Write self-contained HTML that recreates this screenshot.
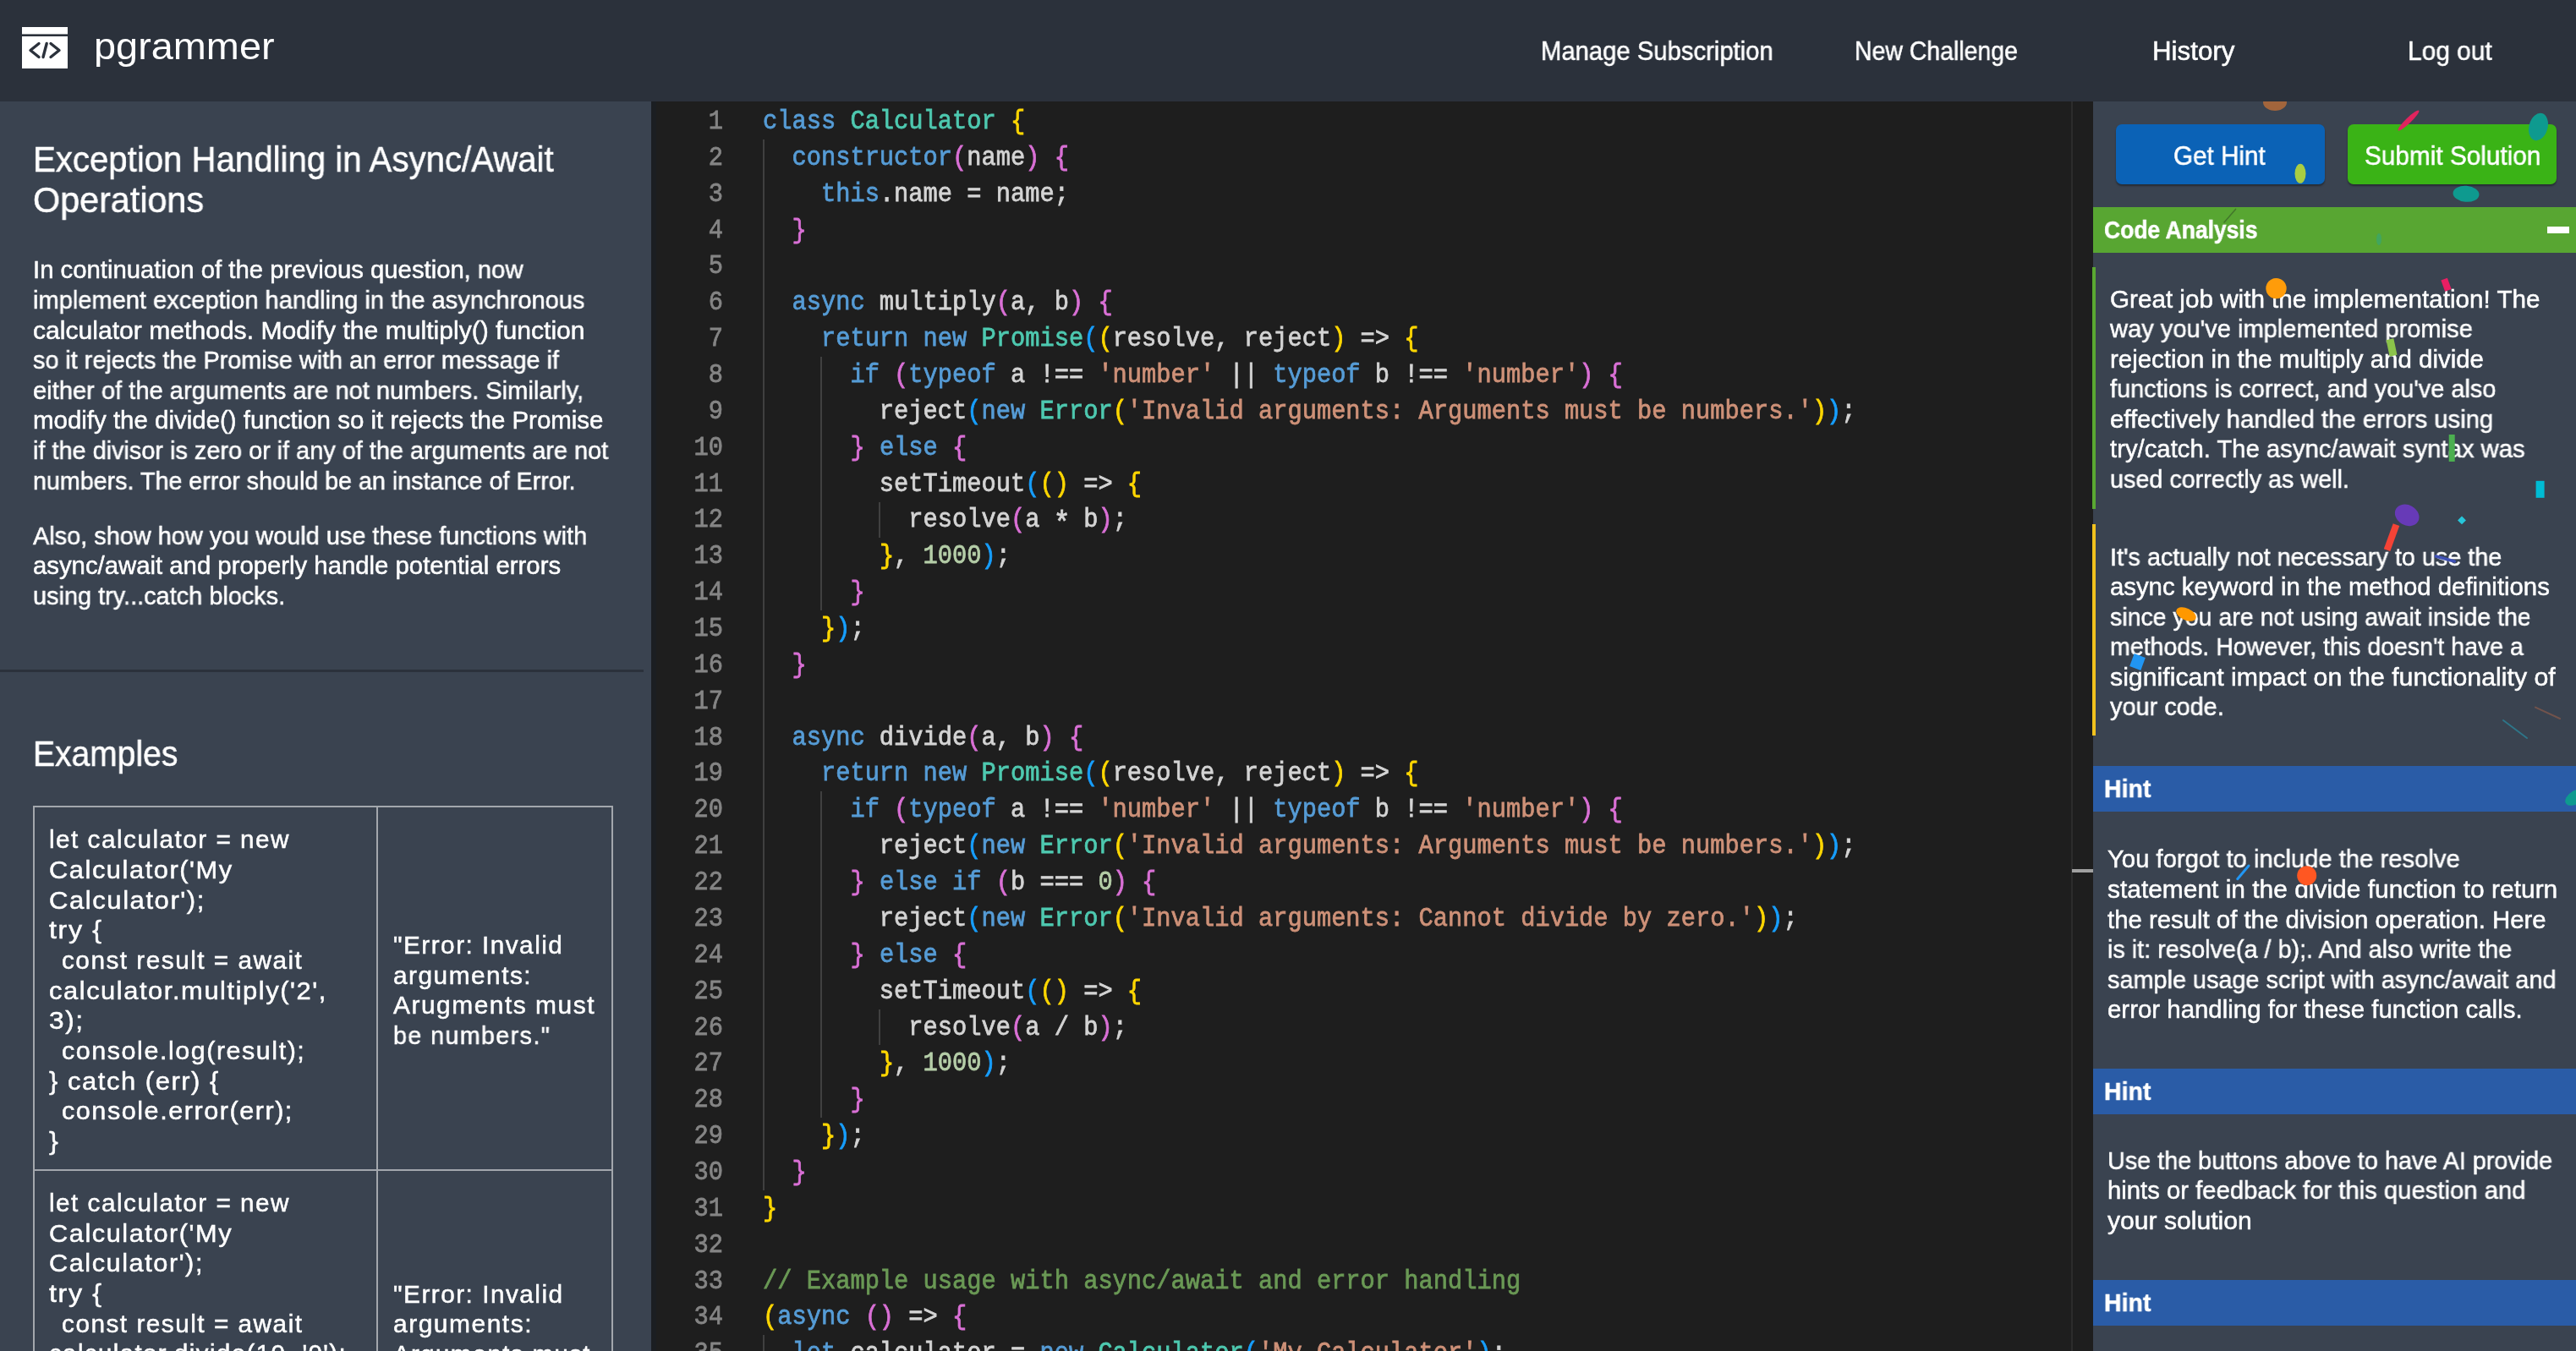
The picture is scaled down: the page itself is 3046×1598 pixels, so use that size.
<!DOCTYPE html><html><head><meta charset="utf-8"><style>
html,body{margin:0;padding:0;width:3046px;height:1598px;overflow:hidden;background:#3a4350}
.t{position:absolute;white-space:pre;font-family:"Liberation Sans", sans-serif;will-change:transform;-webkit-text-stroke:0.5px currentColor}
.m{position:absolute;white-space:pre;font-family:"Liberation Mono", monospace;font-size:28.72px;line-height:28.72px;color:#d4d4d4;will-change:transform;-webkit-text-stroke:0.7px currentColor}
.k{color:#569cd6}.y{color:#4ec9b0}.s{color:#ce9178}.n{color:#b5cea8}.c{color:#6a9955}.b1{color:#ffd700}.b2{color:#da70d6}.b3{color:#179fff}.ast{display:inline-block;transform:translateY(5px) scale(1.15)}
.ln{position:absolute;white-space:pre;font-family:"Liberation Mono", monospace;font-size:28.72px;line-height:28.72px;color:#858585;text-align:right;width:120px;will-change:transform;-webkit-text-stroke:0.7px currentColor}
</style></head><body>
<div style="position:absolute;left:0px;top:0px;width:3046px;height:120px;background:#2b313b;"></div>
<svg style="position:absolute;left:26px;top:32px" width="54" height="49" viewBox="0 0 54 49">
<rect x="0" y="0" width="54" height="8.4" fill="#fff"/>
<rect x="0" y="11" width="54" height="38" fill="#fff"/>
<path d="M20 19.5 L10 27.5 L20 35.5" fill="none" stroke="#2b313b" stroke-width="3.4" stroke-linecap="round" stroke-linejoin="round"/>
<path d="M34 19.5 L44 27.5 L34 35.5" fill="none" stroke="#2b313b" stroke-width="3.4" stroke-linecap="round" stroke-linejoin="round"/>
<path d="M29.2 19.5 L25 35.5" fill="none" stroke="#2b313b" stroke-width="3.4" stroke-linecap="round"/>
</svg>
<div class="t" id="t0" style="left:111.00px;top:31.97px;font-size:45px;line-height:45px;color:#fff;font-weight:400;letter-spacing:0.0px;transform:scale(1.0415,1.0);transform-origin:0 38.09px;-webkit-text-stroke:0;">pgrammer</div>
<div class="t" id="t1" style="left:1822.20px;top:44.68px;font-size:30.5px;line-height:30.5px;color:#fff;font-weight:400;letter-spacing:0.0px;transform:scale(0.9589,1.0);transform-origin:0 25.82px;">Manage Subscription</div>
<div class="t" id="t2" style="left:2193.00px;top:44.68px;font-size:30.5px;line-height:30.5px;color:#fff;font-weight:400;letter-spacing:0.0px;transform:scale(0.932,1.0);transform-origin:0 25.82px;">New Challenge</div>
<div class="t" id="t3" style="left:2544.60px;top:44.68px;font-size:30.5px;line-height:30.5px;color:#fff;font-weight:400;letter-spacing:0.0px;transform:scale(1.0265,1.0);transform-origin:0 25.82px;">History</div>
<div class="t" id="t4" style="left:2846.80px;top:44.68px;font-size:30.5px;line-height:30.5px;color:#fff;font-weight:400;letter-spacing:0.0px;transform:scale(0.9804,1.0);transform-origin:0 25.82px;">Log out</div>
<div style="position:absolute;left:0px;top:120px;width:770px;height:1478px;background:#3a4350;"></div>
<div class="t" id="t5" style="left:38.60px;top:168.45px;font-size:42px;line-height:42px;color:#fff;font-weight:400;letter-spacing:0.0px;transform:scale(0.9565,1.0);transform-origin:0 35.55px;">Exception Handling in Async/Await</div>
<div class="t" id="t6" style="left:38.60px;top:216.45px;font-size:42px;line-height:42px;color:#fff;font-weight:400;letter-spacing:0.0px;transform:scale(0.9834,1.0);transform-origin:0 35.55px;">Operations</div>
<div class="t" id="t7" style="left:39.00px;top:304.30px;font-size:29.3px;line-height:29.3px;color:#fff;font-weight:400;letter-spacing:0.0px;transform:scale(0.9995,1.0);transform-origin:0 24.80px;">In continuation of the previous question, now</div>
<div class="t" id="t8" style="left:39.00px;top:339.90px;font-size:29.3px;line-height:29.3px;color:#fff;font-weight:400;letter-spacing:0.0px;transform:scale(0.9916,1.0);transform-origin:0 24.80px;">implement exception handling in the asynchronous</div>
<div class="t" id="t9" style="left:39.00px;top:375.50px;font-size:29.3px;line-height:29.3px;color:#fff;font-weight:400;letter-spacing:0.0px;transform:scale(1.0276,1.0);transform-origin:0 24.80px;">calculator methods. Modify the multiply() function</div>
<div class="t" id="t10" style="left:39.00px;top:411.10px;font-size:29.3px;line-height:29.3px;color:#fff;font-weight:400;letter-spacing:0.0px;transform:scale(0.9819,1.0);transform-origin:0 24.80px;">so it rejects the Promise with an error message if</div>
<div class="t" id="t11" style="left:39.00px;top:446.70px;font-size:29.3px;line-height:29.3px;color:#fff;font-weight:400;letter-spacing:0.0px;transform:scale(0.9931,1.0);transform-origin:0 24.80px;">either of the arguments are not numbers. Similarly,</div>
<div class="t" id="t12" style="left:39.00px;top:482.30px;font-size:29.3px;line-height:29.3px;color:#fff;font-weight:400;letter-spacing:0.0px;transform:scale(1.0054,1.0);transform-origin:0 24.80px;">modify the divide() function so it rejects the Promise</div>
<div class="t" id="t13" style="left:39.00px;top:517.90px;font-size:29.3px;line-height:29.3px;color:#fff;font-weight:400;letter-spacing:0.0px;transform:scale(0.9851,1.0);transform-origin:0 24.80px;">if the divisor is zero or if any of the arguments are not</div>
<div class="t" id="t14" style="left:39.00px;top:553.50px;font-size:29.3px;line-height:29.3px;color:#fff;font-weight:400;letter-spacing:0.0px;transform:scale(0.9784,1.0);transform-origin:0 24.80px;">numbers. The error should be an instance of Error.</div>
<div class="t" id="t15" style="left:39.00px;top:618.60px;font-size:29.3px;line-height:29.3px;color:#fff;font-weight:400;letter-spacing:0.0px;transform:scale(0.986,1.0);transform-origin:0 24.80px;">Also, show how you would use these functions with</div>
<div class="t" id="t16" style="left:39.00px;top:654.20px;font-size:29.3px;line-height:29.3px;color:#fff;font-weight:400;letter-spacing:0.0px;transform:scale(1.0005,1.0);transform-origin:0 24.80px;">async/await and properly handle potential errors</div>
<div class="t" id="t17" style="left:39.00px;top:689.80px;font-size:29.3px;line-height:29.3px;color:#fff;font-weight:400;letter-spacing:0.0px;transform:scale(0.9863,1.0);transform-origin:0 24.80px;">using try...catch blocks.</div>
<div style="position:absolute;left:0px;top:792px;width:761px;height:3px;background:#2b313b;"></div>
<div class="t" id="t18" style="left:39.00px;top:871.45px;font-size:42px;line-height:42px;color:#fff;font-weight:400;letter-spacing:0.0px;transform:scale(0.929,1.0);transform-origin:0 35.55px;">Examples</div>
<div style="position:absolute;left:39px;top:953px;width:686px;height:2px;background:#a3a7ad;"></div>
<div style="position:absolute;left:39px;top:953px;width:2px;height:700px;background:#a3a7ad;"></div>
<div style="position:absolute;left:445px;top:953px;width:2px;height:700px;background:#a3a7ad;"></div>
<div style="position:absolute;left:723px;top:953px;width:2px;height:700px;background:#a3a7ad;"></div>
<div style="position:absolute;left:39px;top:1383px;width:686px;height:2px;background:#a3a7ad;"></div>
<div class="t" id="t19" style="left:58.00px;top:978.10px;font-size:29.3px;line-height:29.3px;color:#fff;font-weight:400;letter-spacing:1.47px;transform:scale(1.014,1.0);transform-origin:0 24.80px;">let calculator = new</div>
<div class="t" id="t20" style="left:58.00px;top:1013.80px;font-size:29.3px;line-height:29.3px;color:#fff;font-weight:400;letter-spacing:1.47px;transform:scale(1.0522,1.0);transform-origin:0 24.80px;">Calculator(&#x27;My</div>
<div class="t" id="t21" style="left:58.00px;top:1049.50px;font-size:29.3px;line-height:29.3px;color:#fff;font-weight:400;letter-spacing:1.47px;transform:scale(1.0596,1.0);transform-origin:0 24.80px;">Calculator&#x27;);</div>
<div class="t" id="t22" style="left:58.00px;top:1085.20px;font-size:29.3px;line-height:29.3px;color:#fff;font-weight:400;letter-spacing:1.47px;transform:scale(1.1,1.0);transform-origin:0 24.80px;">try {</div>
<div class="t" id="t23" style="left:73.00px;top:1120.90px;font-size:29.3px;line-height:29.3px;color:#fff;font-weight:400;letter-spacing:1.47px;transform:scale(1.0154,1.0);transform-origin:0 24.80px;">const result = await</div>
<div class="t" id="t24" style="left:58.00px;top:1156.60px;font-size:29.3px;line-height:29.3px;color:#fff;font-weight:400;letter-spacing:1.47px;transform:scale(1.0542,1.0);transform-origin:0 24.80px;">calculator.multiply(&#x27;2&#x27;,</div>
<div class="t" id="t25" style="left:58.00px;top:1192.30px;font-size:29.3px;line-height:29.3px;color:#fff;font-weight:400;letter-spacing:1.47px;transform:scale(1.0771,1.0);transform-origin:0 24.80px;">3);</div>
<div class="t" id="t26" style="left:73.00px;top:1228.00px;font-size:29.3px;line-height:29.3px;color:#fff;font-weight:400;letter-spacing:1.47px;transform:scale(1.0414,1.0);transform-origin:0 24.80px;">console.log(result);</div>
<div class="t" id="t27" style="left:58.00px;top:1263.70px;font-size:29.3px;line-height:29.3px;color:#fff;font-weight:400;letter-spacing:1.47px;transform:scale(1.0554,1.0);transform-origin:0 24.80px;">} catch (err) {</div>
<div class="t" id="t28" style="left:73.00px;top:1299.40px;font-size:29.3px;line-height:29.3px;color:#fff;font-weight:400;letter-spacing:1.47px;transform:scale(1.044,1.0);transform-origin:0 24.80px;">console.error(err);</div>
<div class="t" id="t29" style="left:58.00px;top:1335.10px;font-size:29.3px;line-height:29.3px;color:#fff;font-weight:400;letter-spacing:1.47px;transform:scale(1.1,1.0);transform-origin:0 24.80px;">}</div>
<div class="t" id="t30" style="left:464.50px;top:1102.90px;font-size:29.3px;line-height:29.3px;color:#fff;font-weight:400;letter-spacing:1.47px;transform:scale(1.0142,1.0);transform-origin:0 24.80px;">&quot;Error: Invalid</div>
<div class="t" id="t31" style="left:464.50px;top:1138.60px;font-size:29.3px;line-height:29.3px;color:#fff;font-weight:400;letter-spacing:1.47px;transform:scale(1.0177,1.0);transform-origin:0 24.80px;">arguments:</div>
<div class="t" id="t32" style="left:464.50px;top:1174.30px;font-size:29.3px;line-height:29.3px;color:#fff;font-weight:400;letter-spacing:1.47px;transform:scale(1.0218,1.0);transform-origin:0 24.80px;">Arugments must</div>
<div class="t" id="t33" style="left:464.50px;top:1210.00px;font-size:29.3px;line-height:29.3px;color:#fff;font-weight:400;letter-spacing:1.47px;transform:scale(0.9761,1.0);transform-origin:0 24.80px;">be numbers.&quot;</div>
<div class="t" id="t34" style="left:58.00px;top:1408.20px;font-size:29.3px;line-height:29.3px;color:#fff;font-weight:400;letter-spacing:1.47px;transform:scale(1.014,1.0);transform-origin:0 24.80px;">let calculator = new</div>
<div class="t" id="t35" style="left:58.00px;top:1443.80px;font-size:29.3px;line-height:29.3px;color:#fff;font-weight:400;letter-spacing:1.47px;transform:scale(1.0493,1.0);transform-origin:0 24.80px;">Calculator(&#x27;My</div>
<div class="t" id="t36" style="left:58.00px;top:1479.40px;font-size:29.3px;line-height:29.3px;color:#fff;font-weight:400;letter-spacing:1.47px;transform:scale(1.0485,1.0);transform-origin:0 24.80px;">Calculator&#x27;);</div>
<div class="t" id="t37" style="left:58.00px;top:1515.00px;font-size:29.3px;line-height:29.3px;color:#fff;font-weight:400;letter-spacing:1.47px;transform:scale(1.1,1.0);transform-origin:0 24.80px;">try {</div>
<div class="t" id="t38" style="left:73.00px;top:1550.60px;font-size:29.3px;line-height:29.3px;color:#fff;font-weight:400;letter-spacing:1.47px;transform:scale(1.0161,1.0);transform-origin:0 24.80px;">const result = await</div>
<div class="t" id="t39" style="left:58.00px;top:1586.20px;font-size:29.3px;line-height:29.3px;color:#fff;font-weight:400;letter-spacing:1.47px;">calculator.divide(10, &#x27;0&#x27;);</div>
<div class="t" id="t40" style="left:464.50px;top:1515.70px;font-size:29.3px;line-height:29.3px;color:#fff;font-weight:400;letter-spacing:1.47px;transform:scale(1.0153,1.0);transform-origin:0 24.80px;">&quot;Error: Invalid</div>
<div class="t" id="t41" style="left:464.50px;top:1551.10px;font-size:29.3px;line-height:29.3px;color:#fff;font-weight:400;letter-spacing:1.47px;transform:scale(1.0233,1.0);transform-origin:0 24.80px;">arguments:</div>
<div class="t" id="t42" style="left:464.50px;top:1586.50px;font-size:29.3px;line-height:29.3px;color:#fff;font-weight:400;letter-spacing:1.47px;">Arguments must</div>
<div style="position:absolute;left:770px;top:120px;width:1705px;height:1478px;background:#1e1e1e;"></div>
<div style="position:absolute;left:770px;top:120px;width:6px;height:1478px;background:#1b1e22;"></div>
<div style="position:absolute;left:901.5px;top:164.9px;width:2px;height:1242.9px;background:#404040;"></div>
<div style="position:absolute;left:970.4px;top:422.0px;width:2px;height:300.0px;background:#404040;"></div>
<div style="position:absolute;left:970.4px;top:936.3px;width:2px;height:385.7px;background:#404040;"></div>
<div style="position:absolute;left:1039.3px;top:593.5px;width:2px;height:42.9px;background:#404040;"></div>
<div style="position:absolute;left:1039.3px;top:1193.5px;width:2px;height:42.9px;background:#404040;"></div>
<div style="position:absolute;left:901.5px;top:1579.2px;width:2px;height:42.9px;background:#404040;"></div>
<div class="ln" style="left:734.5px;top:131.00px;transform:scaleY(1.11);transform-origin:0 22.00px;">1</div>
<div class="m" style="left:902.0px;top:131.00px;transform:scaleY(1.11);transform-origin:0 22.00px;"><span class="k">class</span> <span class="y">Calculator</span> <span class="b1">{</span></div>
<div class="ln" style="left:734.5px;top:173.86px;transform:scaleY(1.11);transform-origin:0 22.00px;">2</div>
<div class="m" style="left:902.0px;top:173.86px;transform:scaleY(1.11);transform-origin:0 22.00px;">  <span class="k">constructor</span><span class="b2">(</span>name<span class="b2">)</span> <span class="b2">{</span></div>
<div class="ln" style="left:734.5px;top:216.72px;transform:scaleY(1.11);transform-origin:0 22.00px;">3</div>
<div class="m" style="left:902.0px;top:216.72px;transform:scaleY(1.11);transform-origin:0 22.00px;">    <span class="k">this</span>.name = name;</div>
<div class="ln" style="left:734.5px;top:259.58px;transform:scaleY(1.11);transform-origin:0 22.00px;">4</div>
<div class="m" style="left:902.0px;top:259.58px;transform:scaleY(1.11);transform-origin:0 22.00px;">  <span class="b2">}</span></div>
<div class="ln" style="left:734.5px;top:302.44px;transform:scaleY(1.11);transform-origin:0 22.00px;">5</div>
<div class="ln" style="left:734.5px;top:345.30px;transform:scaleY(1.11);transform-origin:0 22.00px;">6</div>
<div class="m" style="left:902.0px;top:345.30px;transform:scaleY(1.11);transform-origin:0 22.00px;">  <span class="k">async</span> multiply<span class="b2">(</span>a, b<span class="b2">)</span> <span class="b2">{</span></div>
<div class="ln" style="left:734.5px;top:388.16px;transform:scaleY(1.11);transform-origin:0 22.00px;">7</div>
<div class="m" style="left:902.0px;top:388.16px;transform:scaleY(1.11);transform-origin:0 22.00px;">    <span class="k">return</span> <span class="k">new</span> <span class="y">Promise</span><span class="b3">(</span><span class="b1">(</span>resolve, reject<span class="b1">)</span> =&gt; <span class="b1">{</span></div>
<div class="ln" style="left:734.5px;top:431.02px;transform:scaleY(1.11);transform-origin:0 22.00px;">8</div>
<div class="m" style="left:902.0px;top:431.02px;transform:scaleY(1.11);transform-origin:0 22.00px;">      <span class="k">if</span> <span class="b2">(</span><span class="k">typeof</span> a !== <span class="s">&#x27;number&#x27;</span> || <span class="k">typeof</span> b !== <span class="s">&#x27;number&#x27;</span><span class="b2">)</span> <span class="b2">{</span></div>
<div class="ln" style="left:734.5px;top:473.88px;transform:scaleY(1.11);transform-origin:0 22.00px;">9</div>
<div class="m" style="left:902.0px;top:473.88px;transform:scaleY(1.11);transform-origin:0 22.00px;">        reject<span class="b3">(</span><span class="k">new</span> <span class="y">Error</span><span class="b1">(</span><span class="s">&#x27;Invalid arguments: Arguments must be numbers.&#x27;</span><span class="b1">)</span><span class="b3">)</span>;</div>
<div class="ln" style="left:734.5px;top:516.74px;transform:scaleY(1.11);transform-origin:0 22.00px;">10</div>
<div class="m" style="left:902.0px;top:516.74px;transform:scaleY(1.11);transform-origin:0 22.00px;">      <span class="b2">}</span> <span class="k">else</span> <span class="b2">{</span></div>
<div class="ln" style="left:734.5px;top:559.60px;transform:scaleY(1.11);transform-origin:0 22.00px;">11</div>
<div class="m" style="left:902.0px;top:559.60px;transform:scaleY(1.11);transform-origin:0 22.00px;">        setTimeout<span class="b3">(</span><span class="b1">()</span> =&gt; <span class="b1">{</span></div>
<div class="ln" style="left:734.5px;top:602.46px;transform:scaleY(1.11);transform-origin:0 22.00px;">12</div>
<div class="m" style="left:902.0px;top:602.46px;transform:scaleY(1.11);transform-origin:0 22.00px;">          resolve<span class="b2">(</span>a <span class="ast">*</span> b<span class="b2">)</span>;</div>
<div class="ln" style="left:734.5px;top:645.32px;transform:scaleY(1.11);transform-origin:0 22.00px;">13</div>
<div class="m" style="left:902.0px;top:645.32px;transform:scaleY(1.11);transform-origin:0 22.00px;">        <span class="b1">}</span>, <span class="n">1000</span><span class="b3">)</span>;</div>
<div class="ln" style="left:734.5px;top:688.18px;transform:scaleY(1.11);transform-origin:0 22.00px;">14</div>
<div class="m" style="left:902.0px;top:688.18px;transform:scaleY(1.11);transform-origin:0 22.00px;">      <span class="b2">}</span></div>
<div class="ln" style="left:734.5px;top:731.04px;transform:scaleY(1.11);transform-origin:0 22.00px;">15</div>
<div class="m" style="left:902.0px;top:731.04px;transform:scaleY(1.11);transform-origin:0 22.00px;">    <span class="b1">}</span><span class="b3">)</span>;</div>
<div class="ln" style="left:734.5px;top:773.90px;transform:scaleY(1.11);transform-origin:0 22.00px;">16</div>
<div class="m" style="left:902.0px;top:773.90px;transform:scaleY(1.11);transform-origin:0 22.00px;">  <span class="b2">}</span></div>
<div class="ln" style="left:734.5px;top:816.76px;transform:scaleY(1.11);transform-origin:0 22.00px;">17</div>
<div class="ln" style="left:734.5px;top:859.62px;transform:scaleY(1.11);transform-origin:0 22.00px;">18</div>
<div class="m" style="left:902.0px;top:859.62px;transform:scaleY(1.11);transform-origin:0 22.00px;">  <span class="k">async</span> divide<span class="b2">(</span>a, b<span class="b2">)</span> <span class="b2">{</span></div>
<div class="ln" style="left:734.5px;top:902.48px;transform:scaleY(1.11);transform-origin:0 22.00px;">19</div>
<div class="m" style="left:902.0px;top:902.48px;transform:scaleY(1.11);transform-origin:0 22.00px;">    <span class="k">return</span> <span class="k">new</span> <span class="y">Promise</span><span class="b3">(</span><span class="b1">(</span>resolve, reject<span class="b1">)</span> =&gt; <span class="b1">{</span></div>
<div class="ln" style="left:734.5px;top:945.34px;transform:scaleY(1.11);transform-origin:0 22.00px;">20</div>
<div class="m" style="left:902.0px;top:945.34px;transform:scaleY(1.11);transform-origin:0 22.00px;">      <span class="k">if</span> <span class="b2">(</span><span class="k">typeof</span> a !== <span class="s">&#x27;number&#x27;</span> || <span class="k">typeof</span> b !== <span class="s">&#x27;number&#x27;</span><span class="b2">)</span> <span class="b2">{</span></div>
<div class="ln" style="left:734.5px;top:988.20px;transform:scaleY(1.11);transform-origin:0 22.00px;">21</div>
<div class="m" style="left:902.0px;top:988.20px;transform:scaleY(1.11);transform-origin:0 22.00px;">        reject<span class="b3">(</span><span class="k">new</span> <span class="y">Error</span><span class="b1">(</span><span class="s">&#x27;Invalid arguments: Arguments must be numbers.&#x27;</span><span class="b1">)</span><span class="b3">)</span>;</div>
<div class="ln" style="left:734.5px;top:1031.06px;transform:scaleY(1.11);transform-origin:0 22.00px;">22</div>
<div class="m" style="left:902.0px;top:1031.06px;transform:scaleY(1.11);transform-origin:0 22.00px;">      <span class="b2">}</span> <span class="k">else</span> <span class="k">if</span> <span class="b2">(</span>b === <span class="n">0</span><span class="b2">)</span> <span class="b2">{</span></div>
<div class="ln" style="left:734.5px;top:1073.92px;transform:scaleY(1.11);transform-origin:0 22.00px;">23</div>
<div class="m" style="left:902.0px;top:1073.92px;transform:scaleY(1.11);transform-origin:0 22.00px;">        reject<span class="b3">(</span><span class="k">new</span> <span class="y">Error</span><span class="b1">(</span><span class="s">&#x27;Invalid arguments: Cannot divide by zero.&#x27;</span><span class="b1">)</span><span class="b3">)</span>;</div>
<div class="ln" style="left:734.5px;top:1116.78px;transform:scaleY(1.11);transform-origin:0 22.00px;">24</div>
<div class="m" style="left:902.0px;top:1116.78px;transform:scaleY(1.11);transform-origin:0 22.00px;">      <span class="b2">}</span> <span class="k">else</span> <span class="b2">{</span></div>
<div class="ln" style="left:734.5px;top:1159.64px;transform:scaleY(1.11);transform-origin:0 22.00px;">25</div>
<div class="m" style="left:902.0px;top:1159.64px;transform:scaleY(1.11);transform-origin:0 22.00px;">        setTimeout<span class="b3">(</span><span class="b1">()</span> =&gt; <span class="b1">{</span></div>
<div class="ln" style="left:734.5px;top:1202.50px;transform:scaleY(1.11);transform-origin:0 22.00px;">26</div>
<div class="m" style="left:902.0px;top:1202.50px;transform:scaleY(1.11);transform-origin:0 22.00px;">          resolve<span class="b2">(</span>a / b<span class="b2">)</span>;</div>
<div class="ln" style="left:734.5px;top:1245.36px;transform:scaleY(1.11);transform-origin:0 22.00px;">27</div>
<div class="m" style="left:902.0px;top:1245.36px;transform:scaleY(1.11);transform-origin:0 22.00px;">        <span class="b1">}</span>, <span class="n">1000</span><span class="b3">)</span>;</div>
<div class="ln" style="left:734.5px;top:1288.22px;transform:scaleY(1.11);transform-origin:0 22.00px;">28</div>
<div class="m" style="left:902.0px;top:1288.22px;transform:scaleY(1.11);transform-origin:0 22.00px;">      <span class="b2">}</span></div>
<div class="ln" style="left:734.5px;top:1331.08px;transform:scaleY(1.11);transform-origin:0 22.00px;">29</div>
<div class="m" style="left:902.0px;top:1331.08px;transform:scaleY(1.11);transform-origin:0 22.00px;">    <span class="b1">}</span><span class="b3">)</span>;</div>
<div class="ln" style="left:734.5px;top:1373.94px;transform:scaleY(1.11);transform-origin:0 22.00px;">30</div>
<div class="m" style="left:902.0px;top:1373.94px;transform:scaleY(1.11);transform-origin:0 22.00px;">  <span class="b2">}</span></div>
<div class="ln" style="left:734.5px;top:1416.80px;transform:scaleY(1.11);transform-origin:0 22.00px;">31</div>
<div class="m" style="left:902.0px;top:1416.80px;transform:scaleY(1.11);transform-origin:0 22.00px;"><span class="b1">}</span></div>
<div class="ln" style="left:734.5px;top:1459.66px;transform:scaleY(1.11);transform-origin:0 22.00px;">32</div>
<div class="ln" style="left:734.5px;top:1502.52px;transform:scaleY(1.11);transform-origin:0 22.00px;">33</div>
<div class="m" style="left:902.0px;top:1502.52px;transform:scaleY(1.11);transform-origin:0 22.00px;"><span class="c">// Example usage with async/await and error handling</span></div>
<div class="ln" style="left:734.5px;top:1545.38px;transform:scaleY(1.11);transform-origin:0 22.00px;">34</div>
<div class="m" style="left:902.0px;top:1545.38px;transform:scaleY(1.11);transform-origin:0 22.00px;"><span class="b1">(</span><span class="k">async</span> <span class="b2">()</span> =&gt; <span class="b2">{</span></div>
<div class="ln" style="left:734.5px;top:1588.24px;transform:scaleY(1.11);transform-origin:0 22.00px;">35</div>
<div class="m" style="left:902.0px;top:1588.24px;transform:scaleY(1.11);transform-origin:0 22.00px;">  <span class="k">let</span> calculator = <span class="k">new</span> <span class="y">Calculator</span><span class="b3">(</span><span class="s">&#x27;My Calculator&#x27;</span><span class="b3">)</span>;</div>
<div style="position:absolute;left:2449px;top:120px;width:2px;height:1478px;background:#2c2c2c;"></div>
<div style="position:absolute;left:2450px;top:1028px;width:25px;height:4px;background:#a0a0a0;"></div>
<div style="position:absolute;left:2475px;top:120px;width:571px;height:1478px;background:#3a4350;"></div>
<div style="position:absolute;left:2501.6px;top:147px;width:247.4px;height:71px;background:#0b62b6;border-radius:7px;box-shadow:0 2px 2px rgba(0,0,0,0.35)"></div>
<div class="t" id="t43" style="left:2570.40px;top:168.68px;font-size:30.5px;line-height:30.5px;color:#fff;font-weight:400;letter-spacing:0.0px;transform:scale(0.9704,1.0);transform-origin:0 25.82px;">Get Hint</div>
<div style="position:absolute;left:2775.7px;top:147px;width:247.3px;height:71px;background:#3ab316;border-radius:7px;box-shadow:0 2px 2px rgba(0,0,0,0.35)"></div>
<div class="t" id="t44" style="left:2795.50px;top:168.68px;font-size:30.5px;line-height:30.5px;color:#fff;font-weight:400;letter-spacing:0.0px;transform:scale(0.9751,1.0);transform-origin:0 25.82px;">Submit Solution</div>
<div style="position:absolute;left:2475px;top:245px;width:571px;height:54px;background:#58a632;"></div>
<div class="t" id="t45" style="left:2487.80px;top:258.45px;font-size:29px;line-height:29px;color:#fff;font-weight:700;letter-spacing:0.0px;transform:scale(0.9127,1.0);transform-origin:0 24.55px;">Code Analysis</div>
<div style="position:absolute;left:3012px;top:267.5px;width:26px;height:8px;background:#fff;"></div>
<div style="position:absolute;left:2474px;top:316px;width:4px;height:286px;background:#5aa832;"></div>
<div class="t" id="t46" style="left:2495.00px;top:338.90px;font-size:29.3px;line-height:29.3px;color:#fff;font-weight:400;letter-spacing:0.0px;transform:scale(1.0118,1.0);transform-origin:0 24.80px;">Great job with the implementation! The</div>
<div class="t" id="t47" style="left:2495.00px;top:374.40px;font-size:29.3px;line-height:29.3px;color:#fff;font-weight:400;letter-spacing:0.0px;transform:scale(0.9921,1.0);transform-origin:0 24.80px;">way you&#x27;ve implemented promise</div>
<div class="t" id="t48" style="left:2495.00px;top:409.90px;font-size:29.3px;line-height:29.3px;color:#fff;font-weight:400;letter-spacing:0.0px;transform:scale(1.0052,1.0);transform-origin:0 24.80px;">rejection in the multiply and divide</div>
<div class="t" id="t49" style="left:2495.00px;top:445.40px;font-size:29.3px;line-height:29.3px;color:#fff;font-weight:400;letter-spacing:0.0px;transform:scale(0.9851,1.0);transform-origin:0 24.80px;">functions is correct, and you&#x27;ve also</div>
<div class="t" id="t50" style="left:2495.00px;top:480.90px;font-size:29.3px;line-height:29.3px;color:#fff;font-weight:400;letter-spacing:0.0px;transform:scale(0.9987,1.0);transform-origin:0 24.80px;">effectively handled the errors using</div>
<div class="t" id="t51" style="left:2495.00px;top:516.40px;font-size:29.3px;line-height:29.3px;color:#fff;font-weight:400;letter-spacing:0.0px;transform:scale(0.999,1.0);transform-origin:0 24.80px;">try/catch. The async/await syntax was</div>
<div class="t" id="t52" style="left:2495.00px;top:551.90px;font-size:29.3px;line-height:29.3px;color:#fff;font-weight:400;letter-spacing:0.0px;transform:scale(0.9818,1.0);transform-origin:0 24.80px;">used correctly as well.</div>
<div style="position:absolute;left:2474px;top:620px;width:4px;height:250px;background:#f2c21e;"></div>
<div class="t" id="t53" style="left:2495.00px;top:643.60px;font-size:29.3px;line-height:29.3px;color:#fff;font-weight:400;letter-spacing:0.0px;transform:scale(0.983,1.0);transform-origin:0 24.80px;">It&#x27;s actually not necessary to use the</div>
<div class="t" id="t54" style="left:2495.00px;top:679.10px;font-size:29.3px;line-height:29.3px;color:#fff;font-weight:400;letter-spacing:0.0px;transform:scale(1.0006,1.0);transform-origin:0 24.80px;">async keyword in the method definitions</div>
<div class="t" id="t55" style="left:2495.00px;top:714.60px;font-size:29.3px;line-height:29.3px;color:#fff;font-weight:400;letter-spacing:0.0px;transform:scale(0.9733,1.0);transform-origin:0 24.80px;">since you are not using await inside the</div>
<div class="t" id="t56" style="left:2495.00px;top:750.10px;font-size:29.3px;line-height:29.3px;color:#fff;font-weight:400;letter-spacing:0.0px;transform:scale(0.9732,1.0);transform-origin:0 24.80px;">methods. However, this doesn&#x27;t have a</div>
<div class="t" id="t57" style="left:2495.00px;top:785.60px;font-size:29.3px;line-height:29.3px;color:#fff;font-weight:400;letter-spacing:0.0px;transform:scale(1.0333,1.0);transform-origin:0 24.80px;">significant impact on the functionality of</div>
<div class="t" id="t58" style="left:2495.00px;top:821.10px;font-size:29.3px;line-height:29.3px;color:#fff;font-weight:400;letter-spacing:0.0px;transform:scale(0.9852,1.0);transform-origin:0 24.80px;">your code.</div>
<div style="position:absolute;left:2475px;top:905.5px;width:571px;height:54px;background:#2a5ca7;"></div>
<div class="t" id="t59" style="left:2488.00px;top:918.95px;font-size:29px;line-height:29px;color:#fff;font-weight:700;letter-spacing:0.0px;transform:scale(0.9825,1.0);transform-origin:0 24.55px;">Hint</div>
<div style="position:absolute;left:2475px;top:1263.8px;width:571px;height:54px;background:#2a5ca7;"></div>
<div class="t" id="t60" style="left:2488.00px;top:1277.25px;font-size:29px;line-height:29px;color:#fff;font-weight:700;letter-spacing:0.0px;transform:scale(0.9825,1.0);transform-origin:0 24.55px;">Hint</div>
<div style="position:absolute;left:2475px;top:1513.7px;width:571px;height:54px;background:#2a5ca7;"></div>
<div class="t" id="t61" style="left:2488.00px;top:1527.15px;font-size:29px;line-height:29px;color:#fff;font-weight:700;letter-spacing:0.0px;transform:scale(0.9825,1.0);transform-origin:0 24.55px;">Hint</div>
<div class="t" id="t62" style="left:2491.50px;top:1001.40px;font-size:29.3px;line-height:29.3px;color:#fff;font-weight:400;letter-spacing:0.0px;transform:scale(0.9983,1.0);transform-origin:0 24.80px;">You forgot to include the resolve</div>
<div class="t" id="t63" style="left:2491.50px;top:1037.00px;font-size:29.3px;line-height:29.3px;color:#fff;font-weight:400;letter-spacing:0.0px;transform:scale(1.0213,1.0);transform-origin:0 24.80px;">statement in the divide function to return</div>
<div class="t" id="t64" style="left:2491.50px;top:1072.60px;font-size:29.3px;line-height:29.3px;color:#fff;font-weight:400;letter-spacing:0.0px;transform:scale(1.0015,1.0);transform-origin:0 24.80px;">the result of the division operation. Here</div>
<div class="t" id="t65" style="left:2491.50px;top:1108.20px;font-size:29.3px;line-height:29.3px;color:#fff;font-weight:400;letter-spacing:0.0px;transform:scale(0.9823,1.0);transform-origin:0 24.80px;">is it: resolve(a / b);. And also write the</div>
<div class="t" id="t66" style="left:2491.50px;top:1143.80px;font-size:29.3px;line-height:29.3px;color:#fff;font-weight:400;letter-spacing:0.0px;transform:scale(0.9842,1.0);transform-origin:0 24.80px;">sample usage script with async/await and</div>
<div class="t" id="t67" style="left:2491.50px;top:1179.40px;font-size:29.3px;line-height:29.3px;color:#fff;font-weight:400;letter-spacing:0.0px;transform:scale(1.0041,1.0);transform-origin:0 24.80px;">error handling for these function calls.</div>
<div class="t" id="t68" style="left:2491.50px;top:1357.60px;font-size:29.3px;line-height:29.3px;color:#fff;font-weight:400;letter-spacing:0.0px;transform:scale(0.9819,1.0);transform-origin:0 24.80px;">Use the buttons above to have AI provide</div>
<div class="t" id="t69" style="left:2491.50px;top:1393.20px;font-size:29.3px;line-height:29.3px;color:#fff;font-weight:400;letter-spacing:0.0px;transform:scale(0.9988,1.0);transform-origin:0 24.80px;">hints or feedback for this question and</div>
<div class="t" id="t70" style="left:2491.50px;top:1428.80px;font-size:29.3px;line-height:29.3px;color:#fff;font-weight:400;letter-spacing:0.0px;transform:scale(1.0278,1.0);transform-origin:0 24.80px;">your solution</div>
<svg style="position:absolute;left:0;top:120px" width="3046" height="1478" viewBox="0 120 3046 1478">
<ellipse cx="2690" cy="121" rx="14" ry="10" transform="rotate(0 2690 121)" fill="#a2653c" opacity="1"/>
<ellipse cx="2848" cy="142.5" rx="17" ry="3.2" transform="rotate(-44 2848 142.5)" fill="#e0245e" opacity="1"/>
<ellipse cx="3001.5" cy="150" rx="11" ry="16.5" transform="rotate(15 3001.5 150)" fill="#0e9a8f" opacity="1"/>
<ellipse cx="2720" cy="205.3" rx="6.5" ry="11.5" transform="rotate(0 2720 205.3)" fill="#a9cd42" opacity="1"/>
<ellipse cx="2916" cy="229.3" rx="15.5" ry="9.5" transform="rotate(5 2916 229.3)" fill="#0e9a8f" opacity="1"/>
<line x1="2630" y1="263" x2="2643.5" y2="247.4" stroke="#3d6b2a" stroke-width="1.5" stroke-linecap="round" opacity="0.8"/>
<ellipse cx="2813" cy="283" rx="3" ry="7" transform="rotate(0 2813 283)" fill="#2aa58a" opacity="0.5"/>
<ellipse cx="2691.5" cy="341.1" rx="12.2" ry="12.2" transform="rotate(0 2691.5 341.1)" fill="#ff9c0a" opacity="1"/>
<rect x="2888.5" y="329.7" width="8" height="14" transform="rotate(-20 2892.5 336.7)" fill="#e91e63" opacity="1"/>
<rect x="2823.5" y="401.0" width="9" height="20" transform="rotate(-12 2828 411)" fill="#8bc34a" opacity="1"/>
<rect x="2895.7" y="514.0" width="7" height="32" transform="rotate(0 2899.2 530)" fill="#4caf50" opacity="1"/>
<rect x="2998.6" y="568.8" width="10" height="20" transform="rotate(0 3003.6 578.8)" fill="#00bcd4" opacity="1"/>
<ellipse cx="2846.2" cy="609.3" rx="15" ry="12" transform="rotate(30 2846.2 609.3)" fill="#673ab7" opacity="1"/>
<rect x="2907.5" y="611.9" width="7" height="7" transform="rotate(45 2911 615.4)" fill="#26c6da" opacity="1"/>
<rect x="2824.0" y="619.6" width="8" height="32" transform="rotate(20 2828 635.6)" fill="#f44336" opacity="1"/>
<line x1="2880.4" y1="658" x2="2902.3" y2="664" stroke="#3f51b5" stroke-width="3.5" stroke-linecap="round" opacity="1"/>
<ellipse cx="2585" cy="726.5" rx="12.5" ry="7" transform="rotate(25 2585 726.5)" fill="#ff9800" opacity="1"/>
<rect x="2520.5" y="775.0" width="14" height="16" transform="rotate(20 2527.5 783)" fill="#2196f3" opacity="1"/>
<line x1="2998" y1="836.6" x2="3027" y2="850" stroke="#8a5a4a" stroke-width="2" stroke-linecap="round" opacity="0.7"/>
<line x1="2960" y1="852" x2="2988" y2="873" stroke="#2a8aa0" stroke-width="2" stroke-linecap="round" opacity="0.7"/>
<ellipse cx="2727.7" cy="1035.7" rx="11.5" ry="11.5" transform="rotate(0 2727.7 1035.7)" fill="#ff5722" opacity="1"/>
<line x1="2645.7" y1="1039.7" x2="2659" y2="1024" stroke="#2196f3" stroke-width="3" stroke-linecap="round" opacity="1"/>
<ellipse cx="3046" cy="943" rx="14" ry="8" transform="rotate(-30 3046 943)" fill="#0e9a8f" opacity="1"/>
</svg>
</body></html>
